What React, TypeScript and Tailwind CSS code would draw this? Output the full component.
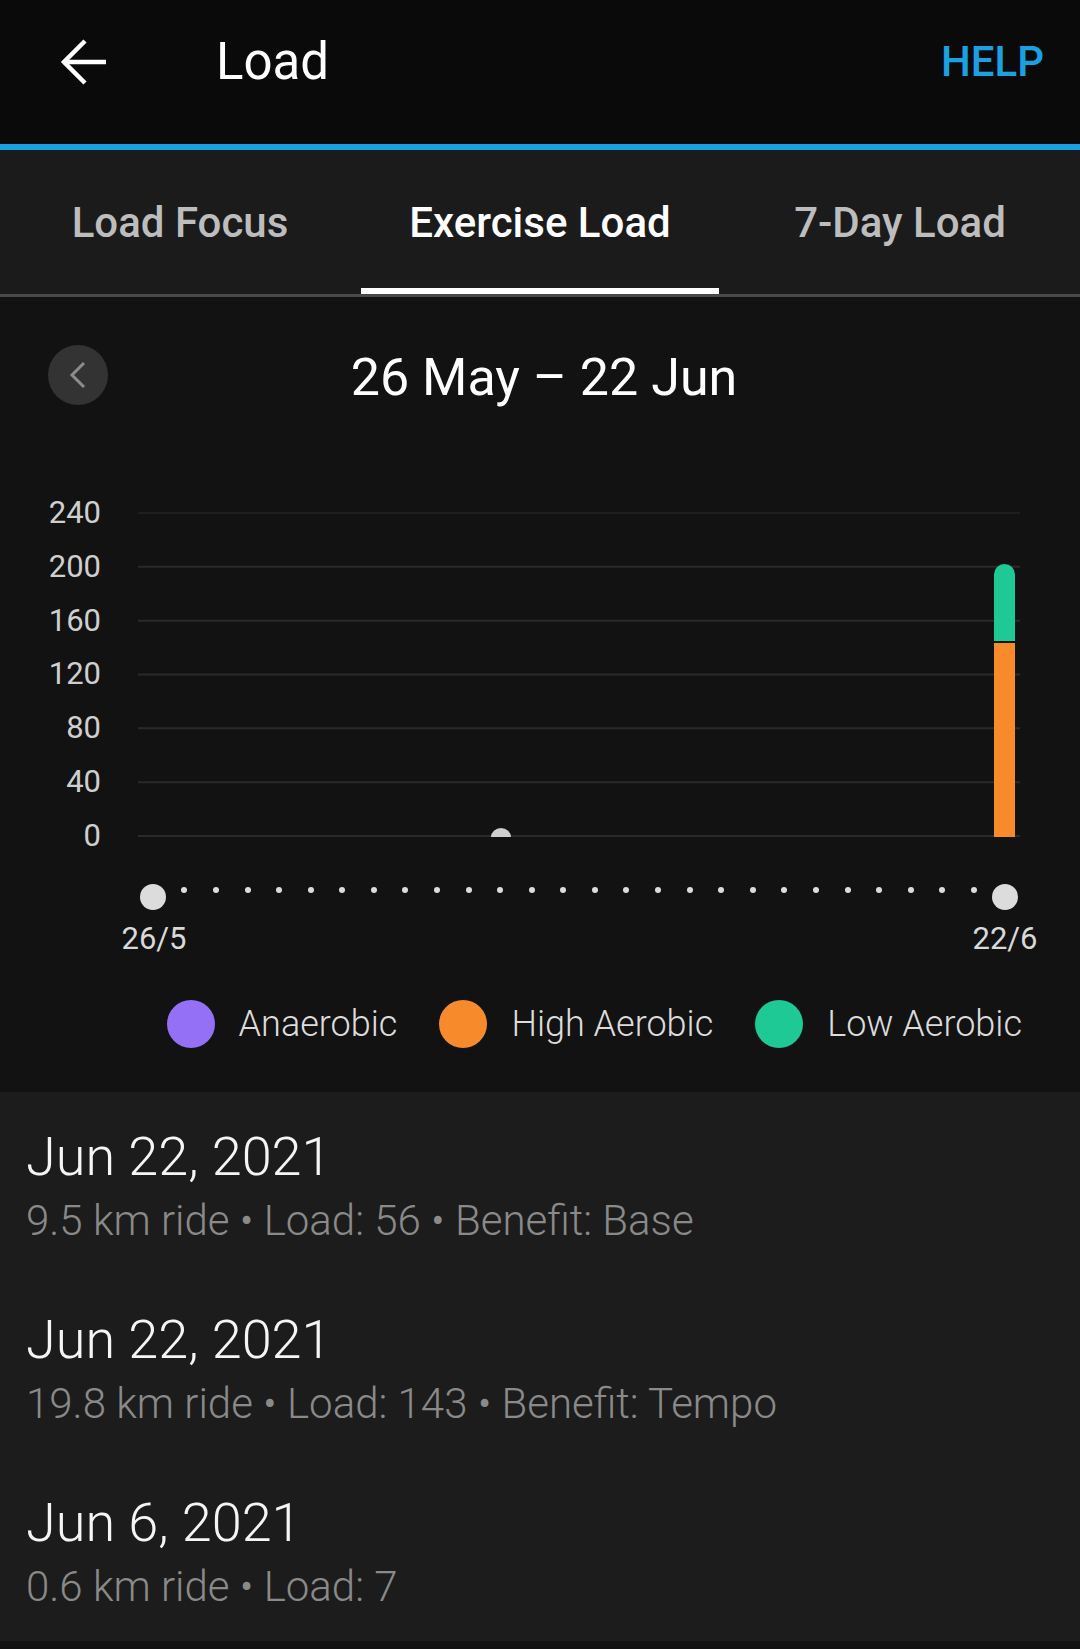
const yLabels = ["240", "200", "160", "120", "80", "40", "0"];
const days = Array.from({ length: 28 }, (_, i) => i);

const activities = [
  { date: "Jun 22, 2021", detail: "9.5 km ride • Load: 56 • Benefit: Base" },
  { date: "Jun 22, 2021", detail: "19.8 km ride • Load: 143 • Benefit: Tempo" },
  { date: "Jun 6, 2021", detail: "0.6 km ride • Load: 7" },
];

const legend = [
  { label: "Anaerobic", color: "bg-[#9370f6]" },
  { label: "High Aerobic", color: "bg-[#f78b2b]" },
  { label: "Low Aerobic", color: "bg-[#1fc995]" },
];

function BackArrow() {
  return (
    <svg width="48" height="48" viewBox="0 0 48 48" fill="none" stroke="white" strokeWidth="4.5">
      <path d="M46 24H5" />
      <path d="M25 3L4 24L25 45" />
    </svg>
  );
}

function Chart() {
  const step = 53.83;
  return (
    <svg className="ml-[37px] mt-[15px]" width="882" height="330">
      {yLabels.map((_, i) => (
        <line
          key={i}
          x1="0"
          x2="882"
          y1={1 + i * step}
          y2={1 + i * step}
          stroke={i === 0 ? "#1e1e1e" : "#2a2a2a"}
          strokeWidth="2"
        />
      ))}
      {/* Jun 6, load 7 */}
      <path d="M353 325 A10 9 0 0 1 373 325 Z" fill="#cfcfcf" />
      {/* Jun 22 stacked bar */}
      <rect x="856" y="131" width="21" height="194" fill="#f78b2b" />
      <path d="M856 129 V62.5 A10.5 10.5 0 0 1 877 62.5 V129 Z" fill="#1fc995" />
    </svg>
  );
}

export default function App() {
  return (
    <div className="min-h-screen bg-[#121212] font-['Roboto',sans-serif] text-white">
      <header className="h-[144px] bg-[#0a0a0a]">
        <div className="flex h-[123px] items-center">
          <button className="ml-[60px] flex h-[48px] w-[48px] items-center justify-center">
            <BackArrow />
          </button>
          <h1 className="ml-[108px] text-[51px] leading-none">Load</h1>
          <span className="ml-auto mr-[36px] text-[42px] font-medium leading-none text-[#1ba0e2]">
            HELP
          </span>
        </div>
      </header>
      <div className="h-[6px] bg-[#1a9fe0]" />

      <nav className="grid h-[147px] grid-cols-3 border-b-[3px] border-[#4a4a4a] bg-[#1b1b1b] text-[42px] font-medium">
        <div className="flex items-center justify-center text-[#bdbdbd]">Load Focus</div>
        <div className="relative flex items-center justify-center text-white">
          Exercise Load
          <div className="absolute bottom-0 left-[1px] right-[1px] h-[6px] bg-white" />
        </div>
        <div className="flex items-center justify-center text-[#bdbdbd]">7-Day Load</div>
      </nav>

      <section className="bg-[#121212] pb-[44px] pt-[48px]">
        <div className="grid h-[60px] grid-cols-[1fr_auto_1fr] items-center">
          <div className="pl-[48px]">
            <div className="flex h-[60px] w-[60px] items-center justify-center rounded-full bg-[#333333]">
              <svg width="18" height="28" viewBox="0 0 18 28" fill="none" stroke="#8c8c8c" strokeWidth="3">
                <path d="M15 2L3 14L15 26" />
              </svg>
            </div>
          </div>
          <div className="pl-[8px] pt-[6px] text-[52px] leading-none">26 May – 22 Jun</div>
          <div />
        </div>

        <div className="mt-[92px] flex">
          <div className="flex h-[355px] w-[101px] flex-col items-end justify-between text-[31px] leading-[32px] text-[#cfcfcf]">
            {yLabels.map((l) => (
              <span key={l}>{l}</span>
            ))}
          </div>
          <Chart />
        </div>

        <div className="ml-[137px] mt-[32px] flex w-[884px]">
          {days.map((i) => (
            <div key={i} className="flex flex-1 justify-center">
              {i === 0 || i === 27 ? (
                <div className="h-[26px] w-[26px] rounded-full bg-[#dcdcdc]" />
              ) : (
                <div className="mt-[3px] h-[6px] w-[6px] rounded-full bg-[#dcdcdc]" />
              )}
            </div>
          ))}
        </div>

        <div className="mt-[13px] flex justify-between pl-[114px] pr-[35px] text-[31px] leading-[32px] text-[#d9d9d9]">
          <span className="w-[80px] text-center">26/5</span>
          <span className="w-[80px] text-center">22/6</span>
        </div>

        <div className="mt-[45px] flex h-[48px] items-center justify-end gap-[42px] pr-[58px]">
          {legend.map((item) => (
            <div key={item.label} className="flex items-center gap-[24px]">
              <div className={`h-[48px] w-[48px] rounded-full ${item.color}`} />
              <span className="text-[36px] font-light leading-none text-[#dcdcdc]">{item.label}</span>
            </div>
          ))}
        </div>
      </section>

      <div className="bg-[#1c1c1c]">
        {activities.map((a, i) => (
          <div key={i} className="h-[183px] pl-[26px] pt-[33px]">
            <div className="text-[54px] font-light leading-[64px] text-[#f5f5f5]">{a.date}</div>
            <div className="text-[42px] font-light leading-[64px] text-[#8a8a8a]">{a.detail}</div>
          </div>
        ))}
      </div>
      <div className="h-[8px] bg-[#111111]" />
    </div>
  );
}
